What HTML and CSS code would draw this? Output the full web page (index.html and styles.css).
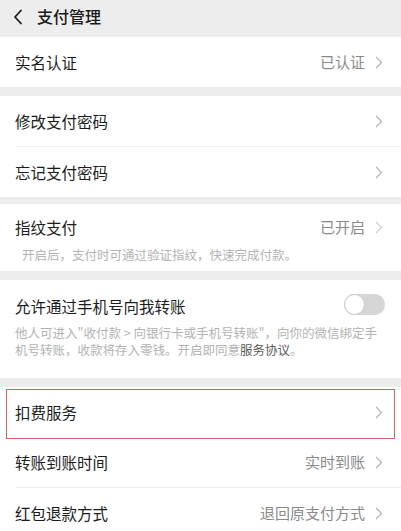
FILE: index.html
```html
<!DOCTYPE html>
<html lang="zh-CN">
<head>
<meta charset="utf-8">
<title>支付管理</title>
<link rel="stylesheet" href="styles.css">
</head>
<body>
<header class="nav">
  <svg class="back" width="10" height="16" viewBox="0 0 10 16"><path d="M8 1.5 L2 8 L8 14.5" fill="none" stroke="#1a1a1a" stroke-width="1.8" stroke-linecap="round" stroke-linejoin="round"/></svg>
  <span class="nav-title">支付管理</span>
</header>

<section class="group g1">
  <div class="row">
    <span class="label">实名认证</span>
    <span class="value">已认证</span>
    <svg class="chev" width="8" height="13" viewBox="0 0 8 13"><path d="M1 1 L6.5 6.5 L1 12" fill="none" stroke="#b5b5b5" stroke-width="1.3"/></svg>
  </div>
</section>

<section class="group g2">
  <div class="row">
    <span class="label">修改支付密码</span>
    <svg class="chev" width="8" height="13" viewBox="0 0 8 13"><path d="M1 1 L6.5 6.5 L1 12" fill="none" stroke="#b5b5b5" stroke-width="1.3"/></svg>
  </div>
  <div class="divider"></div>
  <div class="row">
    <span class="label">忘记支付密码</span>
    <svg class="chev" width="8" height="13" viewBox="0 0 8 13"><path d="M1 1 L6.5 6.5 L1 12" fill="none" stroke="#b5b5b5" stroke-width="1.3"/></svg>
  </div>
</section>

<section class="group g3">
  <div class="row-top">
    <span class="label">指纹支付</span>
    <span class="value">已开启</span>
    <svg class="chev" width="8" height="13" viewBox="0 0 8 13"><path d="M1 1 L6.5 6.5 L1 12" fill="none" stroke="#d0d0d0" stroke-width="1.3"/></svg>
  </div>
  <p class="desc indent">开启后，支付时可通过验证指纹，快速完成付款。</p>
</section>

<section class="group g4">
  <div class="row-top">
    <span class="label">允许通过手机号向我转账</span>
    <span class="switch"><span class="knob"></span></span>
  </div>
  <p class="desc">他人可进入"收付款 &gt; 向银行卡或手机号转账"，向你的微信绑定手机号转账，收款将存入零钱。开启即同意<span class="link">服务协议</span>。</p>
</section>

<section class="group g5">
  <div class="row highlight">
    <span class="label">扣费服务</span>
    <svg class="chev" width="8" height="13" viewBox="0 0 8 13"><path d="M1 1 L6.5 6.5 L1 12" fill="none" stroke="#b5b5b5" stroke-width="1.3"/></svg>
  </div>
  <div class="row">
    <span class="label">转账到账时间</span>
    <span class="value">实时到账</span>
    <svg class="chev" width="8" height="13" viewBox="0 0 8 13"><path d="M1 1 L6.5 6.5 L1 12" fill="none" stroke="#b5b5b5" stroke-width="1.3"/></svg>
  </div>
  <div class="divider"></div>
  <div class="row">
    <span class="label">红包退款方式</span>
    <span class="value">退回原支付方式</span>
    <svg class="chev" width="8" height="13" viewBox="0 0 8 13"><path d="M1 1 L6.5 6.5 L1 12" fill="none" stroke="#b5b5b5" stroke-width="1.3"/></svg>
  </div>
</section>
</body>
</html>
```

FILE: styles.css
```css
* { box-sizing: border-box; }
html, body {
  margin: 0;
  padding: 0;
}
body {
  background: #ededed;
  font-family: "Noto Sans CJK SC", "Noto Sans", sans-serif;
  color: #1c1c1c;
  overflow: hidden;
}
.nav {
  height: 37px;
  display: flex;
  align-items: center;
  padding-left: 13px;
}
.back { display: block; margin-top: -4px; }
.nav-title {
  margin-left: 14px;
  font-size: 16px;
  font-weight: 500;
  line-height: 20px;
  margin-top: -5px;
  color: #1a1a1a;
}
.group {
  background: #fff;
}
.g1 { margin-bottom: 9px; }
.g2 { margin-bottom: 7px; }
.g3 { margin-bottom: 9px; padding: 13px 0 8px; }
.g4 { margin-bottom: 9px; padding: 16px 0 20px; }
.row {
  height: 50px;
  display: flex;
  align-items: center;
  padding: 0 18px 0 15px;
  position: relative;
}
.row-top {
  display: flex;
  align-items: center;
  height: 20px;
  padding: 0 18px 0 15px;
}
.label {
  flex: 1;
  font-size: 15.5px;
  line-height: 20px;
  color: #1c1c1c;
}
.value {
  font-size: 15px;
  line-height: 20px;
  color: #8a8a8a;
  margin-right: 10px;
}
.chev { display: block; flex: none; }
.divider {
  height: 1px;
  background: #f0f0f0;
  margin-left: 16px;
}
.desc {
  margin: 0;
  padding: 0 15px;
  font-size: 12.5px;
  line-height: 17px;
  color: #b3b3b3;
}
.g3 .desc { margin-top: 9px; }
.g4 .desc { margin-top: 8px; padding-right: 12px; }
.desc.indent { padding-left: 22px; }
.link { color: #5a5a5a; }
.switch {
  width: 41px;
  height: 21px;
  border-radius: 11px;
  background: #d6d6d6;
  position: relative;
  flex: none;
  margin-right: -2px;
  margin-top: -4px;
}
.knob {
  position: absolute;
  left: 0;
  top: 0;
  width: 21px;
  height: 21px;
  border-radius: 50%;
  background: #fff;
  border: 1px solid #c8c8c8;
}
.highlight::after {
  content: "";
  position: absolute;
  top: 2px;
  left: 6px;
  right: 6px;
  bottom: -2px;
  border: 1.5px solid #d6625c;
  pointer-events: none;
}
```
